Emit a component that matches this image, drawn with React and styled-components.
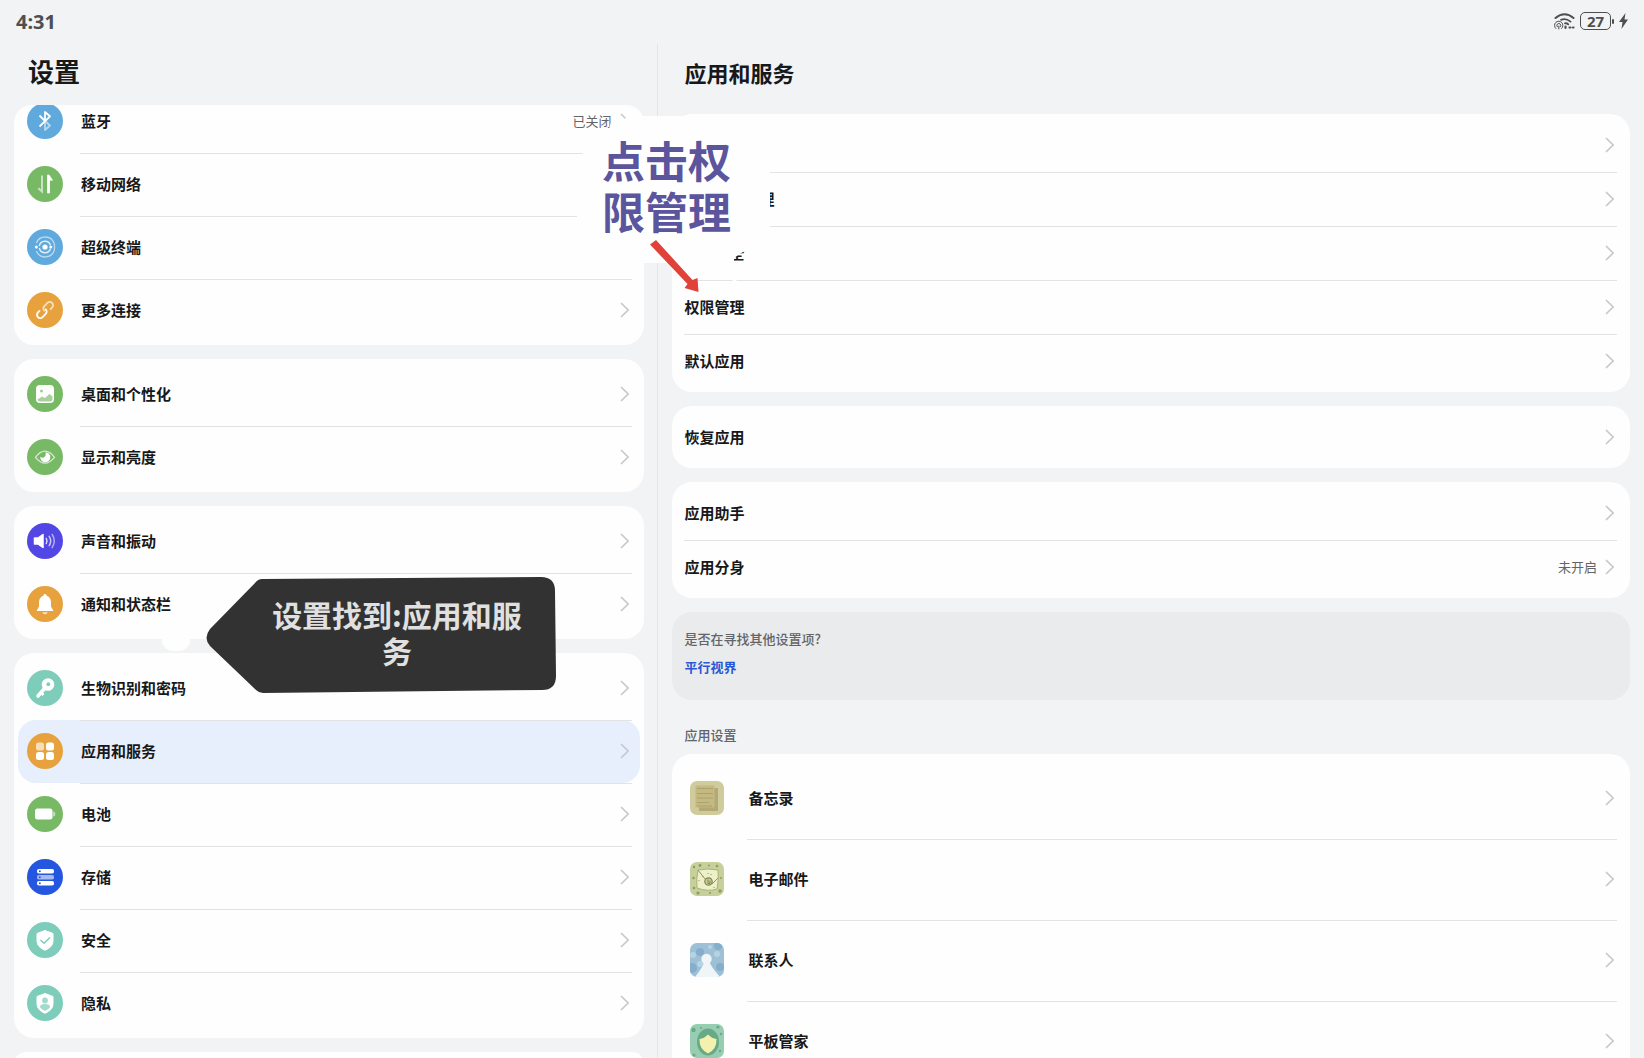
import styled, { createGlobalStyle } from 'styled-components';

const GlobalStyle = createGlobalStyle`
  :root {
    --bg-color: #f1f3f5;
    --card-color: #fefefe;
    --line-color: #e2e3e5;
    --main-font-color: #17181a;
    --sec-font-color: #626467;
    --link-color: #2b57d6;
    --active-color: #e7effd;
  }
  * {
    box-sizing: border-box;
  }
  body {
    margin: 0;
    background-color: var(--bg-color);
    color: var(--main-font-color);
    font-family: 'Noto Sans CJK SC', 'Noto Sans', sans-serif;
  }
  h1, h2, h3, p, ul {
    margin: 0;
    padding: 0;
  }
  ul {
    list-style: none;
  }
`;

const SPage = styled.div`
  position: relative;
  display: flex;
  flex-direction: column;
  height: 100vh;
  overflow: hidden;
`;

const SStatusBar = styled.header`
  display: flex;
  flex-shrink: 0;
  align-items: center;
  justify-content: space-between;
  height: 44px;
  padding: 0 16px 2px;
  color: #4d4f51;
  font-family: 'Noto Sans', sans-serif;
  font-size: 20px;
  font-weight: 700;
  .status-icons {
    display: flex;
    align-items: center;
    gap: 5px;
  }
`;

const SBattery = styled.span`
  display: flex;
  align-items: center;
  gap: 1px;
  .level {
    width: 31px;
    height: 18px;
    border: 1px solid #4d4f51;
    border-radius: 5px;
    font-size: 15px;
    line-height: 16px;
    text-align: center;
  }
  .cap {
    width: 2px;
    height: 5px;
    border-radius: 1px;
    background-color: #4d4f51;
  }
`;

const SPanes = styled.div`
  display: grid;
  flex: 1;
  grid-template-columns: 40% 1fr;
  min-height: 0;
`;

const SMenuPane = styled.nav`
  display: flex;
  flex-direction: column;
  min-height: 0;
  padding: 0 13px 0 14px;
  border-right: 1px solid #e3e5e8;
  h1 {
    flex-shrink: 0;
    height: 61px;
    padding-left: 14px;
    font-size: 26px;
    line-height: 54px;
  }
`;

const SMenuScroll = styled.div`
  flex: 1;
  min-height: 0;
  border-radius: 18px 18px 0 0;
  overflow: hidden;
`;

/* list is scrolled a little, the first row is partly out of view */
const SMenuList = styled.div`
  display: flex;
  flex-direction: column;
  gap: 14px;
  margin-top: -19px;
`;

const SMenuGroup = styled.ul`
  min-height: 24px;
  padding: 4px 4px 3px;
  border-radius: 20px;
  background-color: var(--card-color);
`;

const SMenuRow = styled.a`
  display: flex;
  align-items: center;
  height: 63px;
  padding: 0 8px 2px 9px;
  border-radius: 18px;
  background-color: ${({ $active }) => ($active ? 'var(--active-color)' : 'transparent')};
  color: inherit;
  text-decoration: none;
  > svg {
    flex-shrink: 0;
    margin-right: 17px;
  }
`;

const SRowBody = styled.span`
  display: flex;
  flex: 1;
  align-items: center;
  gap: 8px;
  height: 100%;
  padding: 0 2px 0 ${({ $indent }) => $indent || 1}px;
  border-top: 1px solid ${({ $first }) => ($first ? 'transparent' : 'var(--line-color)')};
  font-size: 15px;
  .label {
    flex: 1;
    padding-bottom: 1px;
    font-weight: 700;
  }
  .value {
    padding-bottom: 1px;
    color: var(--sec-font-color);
    font-size: 13px;
  }
`;

const SDetailPane = styled.main`
  display: flex;
  flex-direction: column;
  min-height: 0;
  padding: 0 14px;
  overflow: hidden;
  h2 {
    flex-shrink: 0;
    height: 70px;
    padding-left: 13px;
    font-size: 22px;
    line-height: 56px;
  }
  h3 {
    flex-shrink: 0;
    padding: 25px 13px 9px;
    color: var(--sec-font-color);
    font-size: 13px;
    font-weight: 500;
    line-height: 20px;
  }
`;

const SDetailGroup = styled.ul`
  flex-shrink: 0;
  margin-bottom: 14px;
  padding: 4px 13px 4px 12px;
  border-radius: 20px;
  background-color: var(--card-color);
`;

const SDetailRow = styled.a`
  display: flex;
  align-items: center;
  height: ${({ $tall }) => ($tall ? 81 : 54)}px;
  padding: 0 0 2px ${({ $tall }) => ($tall ? 6 : 0)}px;
  color: inherit;
  text-decoration: none;
  > svg {
    flex-shrink: 0;
    margin-right: 23px;
  }
`;

const SHint = styled.section`
  flex-shrink: 0;
  height: 88px;
  padding: 17px 13px;
  border-radius: 20px;
  background-color: #e9ebed;
  font-size: 13px;
  line-height: 20px;
  p {
    margin-bottom: 8px;
    color: var(--sec-font-color);
    font-weight: 500;
  }
  a {
    display: block;
    color: var(--link-color);
    font-weight: 700;
    text-decoration: none;
  }
`;

const SAnnotations = styled.div`
  position: absolute;
  inset: 0;
  overflow: hidden;
  pointer-events: none;
  > svg {
    position: absolute;
    top: 0;
    left: 0;
  }
`;

const SStepText = styled.p`
  position: absolute;
  top: 134px;
  left: 602px;
  color: #5b559d;
  font-size: 43px;
  font-weight: 700;
  line-height: 51px;
`;

const SFindText = styled.p`
  position: absolute;
  top: 596px;
  left: 262px;
  width: 270px;
  color: #e0e0e0;
  font-size: 30px;
  font-weight: 700;
  line-height: 36px;
  text-align: center;
`;

const Chevron = () => (
  <svg width="10" height="16" viewBox="0 0 10 16" fill="none" stroke="#c6c7c9" strokeWidth="1.7" strokeLinecap="round" strokeLinejoin="round">
    <path d="M1.5 1.5 8.2 8l-6.7 6.5" />
  </svg>
);

const glyphs = {
  bluetooth: {
    color: '#5fa9dc',
    art: (
      <g fill="none" stroke="#fff" strokeWidth="1.8" strokeLinejoin="round">
        <path d="M18 18l5 4.500-5 4.500v-9" opacity=".55" />
        <path d="M12.500 23.500 23 13.300 18 9v9M12.500 12.500 18 18" />
      </g>
    ),
  },
  mobile: {
    color: '#78b966',
    art: (
      <g fill="none" stroke="#fff">
        <path d="M15 9.500v16l-3.700-3.200" strokeWidth="2" opacity=".6" />
        <path d="M20.500 27V9h1.500l3.500 5.200H22.500V27z" fill="#fff" strokeWidth=".8" />
      </g>
    ),
  },
  superDevice: {
    color: '#5fa9dc',
    art: (
      <g fill="none" stroke="#fff" strokeWidth="1.400">
        <circle cx="18" cy="18" r="2.600" fill="#fff" stroke="none" />
        <path d="M12.300 17a5.800 5.800 0 0 1 11.200-.800M23.500 19.800A5.800 5.800 0 0 1 12.300 19" opacity=".8" />
        <path d="M9.400 14a9.500 9.500 0 0 1 17.800 0.500q.700 3.500 0 7A9.500 9.500 0 0 1 9.400 22" opacity=".55" />
        <circle cx="9.300" cy="18" r="1.500" fill="#fff" stroke="none" />
        <circle cx="23.800" cy="18" r="1.500" fill="#fff" stroke="none" />
      </g>
    ),
  },
  link: {
    color: '#e7a23e',
    art: (
      <g fill="none" stroke="#fff" strokeWidth="1.800" strokeLinecap="round" transform="rotate(-45 18 18)">
        <path d="M17 18a3.300 3.300 0 0 1 3.300-3.300h4.400a3.300 3.300 0 0 1 0 6.600H22.500" opacity=".65" />
        <path d="M13.500 14.700h-2.200a3.300 3.300 0 0 0 0 6.600h4.400a3.300 3.300 0 0 0 3.300-3.300" />
      </g>
    ),
  },
  picture: {
    color: '#78b966',
    art: (
      <g>
        <rect x="9" y="9" width="18" height="18" rx="4" fill="#fff" />
        <circle cx="14.500" cy="15" r="1.600" fill="#a6d19a" />
        <path d="M10.500 23.500 15 20.500l3 1.500 4.500-4 3 2.500V23a2.500 2.500 0 0 1-2.500 2.500H13a2.500 2.500 0 0 1-2.500-2z" fill="#a6d19a" />
      </g>
    ),
  },
  eye: {
    color: '#78b966',
    art: (
      <g>
        <path d="M8.500 18.300q9.500-12.300 19 0q-9.500 11.800-19 0z" fill="none" stroke="#fff" strokeWidth="1.300" opacity=".7" />
        <path d="M18.500 13.200a5 5 0 1 1-5.200 4.500q2 1.800 4.200.300 2-1.700 1-4.800z" fill="#fff" />
      </g>
    ),
  },
  sound: {
    color: '#5247e5',
    art: (
      <g fill="none" stroke="#fff" strokeWidth="1.500" strokeLinecap="round">
        <path d="M7.500 15h3.500l5-3.500v13L11 21H7.500z" fill="#fff" strokeLinejoin="round" />
        <path d="M19.300 15.500q1.400 2.500 0 5" opacity=".8" />
        <path d="M22.200 13.300q3 4.700 0 9.400" opacity=".7" />
        <path d="M25.200 11.500q4.200 6.500 0 13" opacity=".55" />
      </g>
    ),
  },
  bell: {
    color: '#e7a23e',
    art: (
      <g fill="#fff">
        <path d="M16.300 9.800a1.700 1.700 0 0 1 3.400 0q4.300 1.400 4.300 6.700v4l2.500 4.500h-17l2.500-4.500v-4q0-5.300 4.300-6.700z" />
        <path d="M15.500 26.200h5a2.500 2 0 0 1-5 0z" opacity=".7" />
      </g>
    ),
  },
  key: {
    color: '#7eccba',
    art: (
      <g>
        <path d="M18 18 11 26" stroke="#fff" strokeWidth="3.600" strokeLinecap="round" />
        <path d="M13.500 22l3 3" stroke="#fff" strokeWidth="2.500" />
        <circle cx="21" cy="14.500" r="6.300" fill="#fff" />
        <circle cx="21.300" cy="14.200" r="1.900" fill="#7eccba" />
      </g>
    ),
  },
  apps: {
    color: '#e7a23e',
    art: (
      <g fill="#fff">
        <rect x="9" y="9.500" width="8" height="8" rx="2.500" opacity=".65" />
        <rect x="19" y="9.500" width="8" height="8" rx="2.500" />
        <rect x="9" y="19" width="8" height="8" rx="2.500" />
        <rect x="19" y="19" width="8" height="8" rx="2.500" />
      </g>
    ),
  },
  battery: {
    color: '#78b966',
    art: (
      <g fill="#fff">
        <rect x="8" y="12.500" width="17.500" height="11" rx="2.500" />
        <path d="M26.300 15.500q2 0 2 2.500t-2 2.500z" opacity=".6" />
      </g>
    ),
  },
  storage: {
    color: '#2456df',
    art: (
      <g fill="#fff">
        <rect x="10" y="10" width="17" height="4.600" rx="1.800" />
        <rect x="10" y="16" width="17" height="4.600" rx="1.800" opacity=".6" />
        <rect x="10" y="22" width="17" height="4.600" rx="1.800" />
        <g fill="#2456df">
          <circle cx="12.800" cy="12.300" r="1" />
          <circle cx="12.800" cy="18.300" r="1" />
          <circle cx="12.800" cy="24.300" r="1" />
        </g>
      </g>
    ),
  },
  shield: {
    color: '#7eccba',
    art: (
      <g>
        <path d="M18 8.500l8 3v7.500q0 6-8 9.300-8-3.300-8-9.300v-7.500z" fill="#fff" stroke="#fff" strokeLinejoin="round" />
        <path d="M13.500 18l3.500 3.300 6-5.800" fill="none" stroke="#7eccba" strokeWidth="1.500" />
      </g>
    ),
  },
  privacy: {
    color: '#7eccba',
    art: (
      <g>
        <path d="M18 8.500l8 3v7.500q0 6-8 9.300-8-3.300-8-9.300v-7.500z" fill="#fff" stroke="#fff" strokeLinejoin="round" />
        <circle cx="18" cy="15.500" r="2.900" fill="#a3dacd" />
        <path d="M13 22.300q0-3.300 5-3.300t5 3.300q-1.800 2.500-5 3.800-3.200-1.300-5-3.800z" fill="#a3dacd" />
      </g>
    ),
  },
};

const MenuIcon = ({ name }) => (
  <svg width="36" height="36" viewBox="0 0 36 36">
    <circle cx="18" cy="18" r="18" fill={glyphs[name].color} />
    {glyphs[name].art}
  </svg>
);

const appArt = {
  memo: (
    <g>
      <rect width="34" height="34" rx="7" fill="#cfcb9d" />
      <path d="M9 7h19v23H9z" fill="#b3a974" />
      <path d="M5.500 4.500h19v22h-19z" fill="#c3b981" />
      <path d="M7 7.500h16M7 12.500h16M7 17h16M7 21.500h12M7 25h15" stroke="#aca26b" />
    </g>
  ),
  mail: (
    <g>
      <rect width="34" height="34" rx="7" fill="#c5d09b" />
      <g fill="#8f9a64">
        <circle cx="4" cy="5" r="1.200" />
        <circle cx="10" cy="3.500" r="1.400" />
        <circle cx="19" cy="3.500" r="1" />
        <circle cx="27" cy="4" r="1.300" />
        <circle cx="3.500" cy="16" r="1.200" />
        <circle cx="4" cy="26" r="1.300" />
        <circle cx="8" cy="31" r="1.600" />
        <circle cx="20" cy="31" r="1" />
        <circle cx="30" cy="29" r="1.700" />
        <circle cx="31" cy="16" r="1" />
      </g>
      <path d="M8 8q10-2 20 0 1 9-1 19-9 3-20-1-1-9 1-18z" fill="#edf0c8" stroke="#a9b377" />
      <path d="M8 8l7 9M28 16l-6 6M13 14v1M18 11v1M21 12v1M24 25v1M9 18v1" fill="none" stroke="#8f965f" />
      <circle cx="18.500" cy="19.500" r="3.700" fill="#c9cd97" stroke="#80854e" strokeWidth="1.200" />
      <path d="M18 17.500v4h2v-3" fill="none" stroke="#80854e" />
    </g>
  ),
  contacts: (
    <g>
      <clipPath id="contacts-clip">
        <rect width="34" height="34" rx="7" />
      </clipPath>
      <g clipPath="url(#contacts-clip)">
        <rect width="34" height="34" fill="#9dc0d6" />
        <g fill="#86adc9">
          <circle cx="10" cy="9" r="4" />
          <circle cx="28" cy="3" r="4" />
          <circle cx="2" cy="25" r="5" />
          <circle cx="30" cy="24" r="4" />
        </g>
        <g fill="#b4d3e3">
          <circle cx="3" cy="12" r="3" />
          <circle cx="27" cy="11" r="3" />
          <circle cx="20" cy="4" r="2" />
          <circle cx="10" cy="21" r="3" />
        </g>
        <circle cx="16.500" cy="16" r="5.200" fill="#f0f5f8" />
        <path d="M14 19h5.500q1 4 10.500 15H5Q13 24 14 19z" fill="#f0f5f8" />
      </g>
    </g>
  ),
  manager: (
    <g>
      <rect width="34" height="34" rx="7" fill="#97cdb0" />
      <g fill="#68a988">
        <circle cx="3.500" cy="6" r="2.200" />
        <circle cx="11" cy="4" r="1" />
        <circle cx="28" cy="3" r="1.600" />
        <circle cx="31" cy="10" r="1.200" />
        <circle cx="4" cy="31" r="1.500" />
        <circle cx="30" cy="27" r="1.200" />
        <ellipse cx="18" cy="18" rx="11" ry="13.500" />
      </g>
      <path d="M18 10.500q4 4 8.500 4.500.500 10-8.500 14.500Q9 25 9.500 15q4.500-.500 8.500-4.500z" fill="#f4f0ae" />
    </g>
  ),
};

const AppIcon = ({ name }) => (
  <svg width="34" height="34" viewBox="0 0 34 34">
    {appArt[name]}
  </svg>
);

const menuGroups = [
  [
    { icon: 'bluetooth', label: '蓝牙', value: '已关闭' },
    { icon: 'mobile', label: '移动网络' },
    { icon: 'superDevice', label: '超级终端' },
    { icon: 'link', label: '更多连接' },
  ],
  [
    { icon: 'picture', label: '桌面和个性化' },
    { icon: 'eye', label: '显示和亮度' },
  ],
  [
    { icon: 'sound', label: '声音和振动' },
    { icon: 'bell', label: '通知和状态栏' },
  ],
  [
    { icon: 'key', label: '生物识别和密码' },
    { icon: 'apps', label: '应用和服务', active: true },
    { icon: 'battery', label: '电池' },
    { icon: 'storage', label: '存储' },
    { icon: 'shield', label: '安全' },
    { icon: 'privacy', label: '隐私' },
  ],
  [],
];

const detailGroups = [
  [
    { label: '' },
    { label: '应用启动管理' },
    { label: '应用安全' },
    { label: '权限管理' },
    { label: '默认应用' },
  ],
  [{ label: '恢复应用' }],
  [{ label: '应用助手' }, { label: '应用分身', value: '未开启' }],
];

const appSettings = [
  { icon: 'memo', label: '备忘录' },
  { icon: 'mail', label: '电子邮件' },
  { icon: 'contacts', label: '联系人' },
  { icon: 'manager', label: '平板管家' },
];

const RowBody = ({ row, first, indent }) => (
  <SRowBody $first={first} $indent={indent}>
    <span className="label">{row.label}</span>
    {row.value && <span className="value">{row.value}</span>}
    <Chevron />
  </SRowBody>
);

const StatusBar = () => (
  <SStatusBar>
    <span>4:31</span>
    <div className="status-icons">
      <svg width="21" height="17" viewBox="0 0 21 17" fill="none" stroke="#4d4f51" strokeLinecap="round">
        <path d="M1.500 5q9-7.500 18 0" strokeWidth="2" />
        <path d="M7 6.800q5-1.800 9.500 1.800" strokeWidth="1.800" />
        <path d="M11 10.300q2-.300 3.300 1" strokeWidth="1.800" />
        <path d="M1.800 15.500a4.200 4.200 0 1 1 5.800 0M3.300 13.800a2 2 0 1 1 3 0M4.800 13v3" strokeWidth="1" />
        <path d="M11.500 13.500v1.500M15.500 14.500h1M19 14.500h.500" strokeWidth="2.200" />
      </svg>
      <SBattery>
        <span className="level">27</span>
        <span className="cap" />
      </SBattery>
      <svg width="9" height="16" viewBox="0 0 9 16">
        <path d="M6.500 0 0 9H3.500L2.500 16 9 6.500H5.500z" fill="#4d4f51" />
      </svg>
    </div>
  </SStatusBar>
);

const Annotations = () => (
  <SAnnotations>
    <svg width="800" height="720" viewBox="0 0 800 720">
      <path
        d="M583 150 600 130l9-1 4-13 9 5 6-5h57l85 20v104l-23 11-4 1-9 6 0 11 3 14h-4l-2-13h-32l-2 12h-13l-13-19h-27l-44-2-23-12v-35z"
        fill="#fefefe"
      />
      <path d="M162 636h28v6q-3 9-11 9h-6q-8 0-11-9z" fill="#fefefe" />
      <path d="M656 240 692.500 280l5-2 1 14-14-4 3-4-37.500-39.500z" fill="#e0423a" />
      <path
        d="M262 579 541 577q14 0 14 14l1 85q0 14-14 14L263 693q-4 0-7-3L210 646q-7-8 0-17l45-46q3-4 7-4z"
        fill="#323232"
      />
    </svg>
    <SStepText>
      点击权
      <br />
      限管理
    </SStepText>
    <SFindText>设置找到:应用和服务</SFindText>
  </SAnnotations>
);

const App = () => {
  return (
    <SPage>
      <GlobalStyle />
      <StatusBar />
      <SPanes>
        <SMenuPane>
          <h1>设置</h1>
          <SMenuScroll>
            <SMenuList>
              {menuGroups.map((rows, i) => (
                <SMenuGroup key={i}>
                  {rows.map((row, j) => (
                    <li key={row.label}>
                      <SMenuRow href="#" $active={row.active}>
                        <MenuIcon name={row.icon} />
                        <RowBody row={row} first={j === 0} />
                      </SMenuRow>
                    </li>
                  ))}
                </SMenuGroup>
              ))}
            </SMenuList>
          </SMenuScroll>
        </SMenuPane>
        <SDetailPane>
          <h2>应用和服务</h2>
          {detailGroups.map((rows, i) => (
            <SDetailGroup key={i}>
              {rows.map((row, j) => (
                <li key={row.label}>
                  <SDetailRow href="#">
                    <RowBody row={row} first={j === 0} />
                  </SDetailRow>
                </li>
              ))}
            </SDetailGroup>
          ))}
          <SHint>
            <p>是否在寻找其他设置项?</p>
            <a href="#">平行视界</a>
          </SHint>
          <h3>应用设置</h3>
          <SDetailGroup>
            {appSettings.map((row, j) => (
              <li key={row.label}>
                <SDetailRow href="#" $tall>
                  <AppIcon name={row.icon} />
                  <RowBody row={row} first={j === 0} indent={2} />
                </SDetailRow>
              </li>
            ))}
          </SDetailGroup>
        </SDetailPane>
      </SPanes>
      <Annotations />
    </SPage>
  );
};

export default App;
